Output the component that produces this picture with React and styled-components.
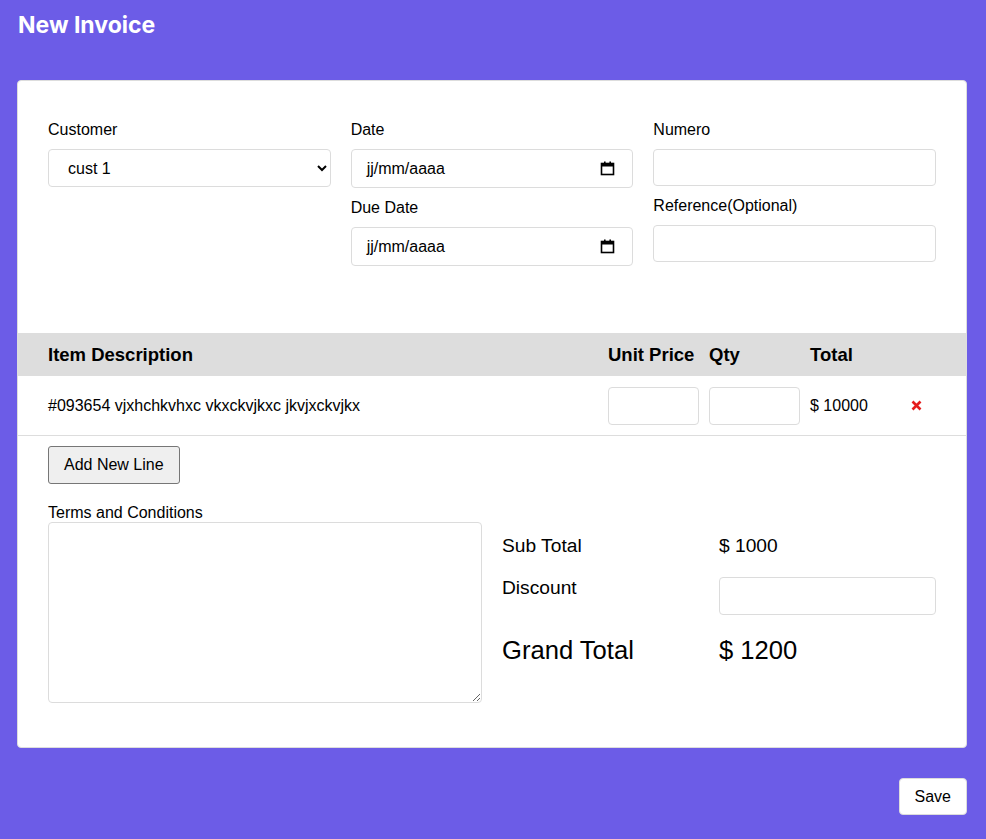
import React from 'react';
import styled, { createGlobalStyle } from 'styled-components';

const GlobalStyle = createGlobalStyle`
  html, body {
    margin: 0;
    padding: 0;
    background: #6c5ce7;
  }
  body {
    font-family: "Liberation Sans", Arial, sans-serif;
    color: #000;
  }
  * {
    box-sizing: border-box;
  }
`;

const CalendarIcon = () => (
  <svg width="15" height="15" viewBox="0 0 15 15" aria-hidden="true">
    <rect x="1.5" y="2.5" width="12" height="11" fill="none" stroke="#000" strokeWidth="1.6" />
    <rect x="1.5" y="2.5" width="12" height="3" fill="#000" />
    <rect x="4" y="0.5" width="1.6" height="3" fill="#000" />
    <rect x="9.4" y="0.5" width="1.6" height="3" fill="#000" />
  </svg>
);

const RemoveIcon = () => (
  <svg width="11" height="11" viewBox="0 0 11 11" aria-hidden="true">
    <path d="M1.5 1.5 L9.5 9.5 M9.5 1.5 L1.5 9.5" stroke="#e51c1c" strokeWidth="2.6" strokeLinecap="butt" />
  </svg>
);

const App = () => (
  <Page>
    <GlobalStyle />
    <Title>New Invoice</Title>
    <Card>
      <TopSection>
        <Column>
          <Label>Customer</Label>
          <Select defaultValue="cust1">
            <option value="cust1">cust 1</option>
            <option value="cust2">cust 2</option>
          </Select>
        </Column>
        <Column>
          <Label>Date</Label>
          <DateBox>
            <span>jj/mm/aaaa</span>
            <CalendarIcon />
          </DateBox>
          <Label>Due Date</Label>
          <DateBox>
            <span>jj/mm/aaaa</span>
            <CalendarIcon />
          </DateBox>
        </Column>
        <Column>
          <Label>Numero</Label>
          <TextInput />
          <Label>Reference(Optional)</Label>
          <TextInput />
        </Column>
      </TopSection>

      <TableHead>
        <span>Item Description</span>
        <span>Unit Price</span>
        <span>Qty</span>
        <span>Total</span>
        <span />
      </TableHead>
      <TableRow>
        <span>#093654 vjxhchkvhxc vkxckvjkxc jkvjxckvjkx</span>
        <CellInput />
        <CellInput />
        <span>$ 10000</span>
        <RemoveButton type="button" aria-label="remove line">
          <RemoveIcon />
        </RemoveButton>
      </TableRow>

      <BottomSection>
        <AddLineButton type="button">Add New Line</AddLineButton>
        <TermsLabel>Terms and Conditions</TermsLabel>
        <BottomGrid>
          <Terms />
          <Summary>
            <SummaryText>Sub Total</SummaryText>
            <SummaryText>$ 1000</SummaryText>
            <SummaryText>Discount</SummaryText>
            <DiscountInput />
            <SummaryText $big>Grand Total</SummaryText>
            <SummaryText $big>$ 1200</SummaryText>
          </Summary>
        </BottomGrid>
      </BottomSection>
    </Card>
    <Footer>
      <SaveButton type="button">Save</SaveButton>
    </Footer>
  </Page>
);

export default App;

const Page = styled.div`
  min-height: 100vh;
  background: #6c5ce7;
  padding: 11px 19px 24px 17px;
`;

const Title = styled.h1`
  margin: 0 0 40px 1px;
  font-family: Inter, "Liberation Sans", sans-serif;
  font-size: 23px;
  font-weight: 700;
  line-height: 29px;
  color: #fff;
`;

const Card = styled.div`
  background: #fff;
  border: 1px solid #ddd;
  border-radius: 4px;
  overflow: hidden;
`;

const TopSection = styled.div`
  display: grid;
  grid-template-columns: repeat(3, 1fr);
  column-gap: 20px;
  padding: 40px 30px 67px;
`;

const Column = styled.div`
  display: flex;
  flex-direction: column;
`;

const Label = styled.label`
  display: block;
  font-size: 16px;
  line-height: 18px;
  margin-bottom: 10px;

  input + &, div + & {
    margin-top: 11px;
  }
`;

const fieldBase = `
  width: 100%;
  border: 1px solid #dcdcdc;
  border-radius: 4px;
  background: #fff;
  font-family: "Liberation Sans", Arial, sans-serif;
  font-size: 16px;
  color: #000;
  outline: none;
`;

const Select = styled.select`
  ${fieldBase}
  height: 38px;
  padding: 0 8px 0 15px;
`;

const DateBox = styled.div`
  ${fieldBase}
  height: 39px;
  display: flex;
  align-items: center;
  justify-content: space-between;
  padding: 0 17px 0 15px;
`;

const TextInput = styled.input`
  ${fieldBase}
  height: 37px;
  padding: 0 12px;
`;

const TableHead = styled.div`
  display: grid;
  grid-template-columns: 560px 101px 101px 100px 1fr;
  align-items: center;
  height: 43px;
  padding: 0 30px;
  background: #dddddd;
  font-size: 18.5px;
  font-weight: 700;
`;

const TableRow = styled.div`
  display: grid;
  grid-template-columns: 560px 101px 101px 100px 1fr;
  align-items: center;
  height: 60px;
  padding: 0 30px;
  border-bottom: 1px solid #dddddd;
  font-size: 16px;
`;

const CellInput = styled.input`
  ${fieldBase}
  width: 91px;
  height: 38px;
  padding: 0 8px;
`;

const RemoveButton = styled.button`
  display: flex;
  align-items: center;
  border: none;
  background: none;
  padding: 0 0 0 1px;
  cursor: pointer;
`;

const BottomSection = styled.div`
  padding: 10px 30px 44px;
`;

const AddLineButton = styled.button`
  display: block;
  height: 38px;
  padding: 0 15px;
  font-family: "Liberation Sans", Arial, sans-serif;
  font-size: 16px;
  color: #000;
  background: #efefef;
  border: 1px solid #767676;
  border-radius: 3px;
`;

const TermsLabel = styled.label`
  display: block;
  margin-top: 20px;
  font-size: 16px;
  line-height: 18px;
`;

const BottomGrid = styled.div`
  display: grid;
  grid-template-columns: 1fr 1fr;
  column-gap: 20px;
`;

const Terms = styled.textarea`
  ${fieldBase}
  height: 181px;
  resize: vertical;
  padding: 8px;
`;

const Summary = styled.div`
  display: grid;
  grid-template-columns: 1fr 1fr;
  align-content: start;
  row-gap: 20px;
  padding-top: 13px;
`;

const SummaryText = styled.div`
  font-size: ${(p) => (p.$big ? '25.6px' : '19.2px')};
  line-height: ${(p) => (p.$big ? '30px' : '22px')};
`;

const DiscountInput = styled.input`
  ${fieldBase}
  height: 38px;
  padding: 0 12px;
`;

const Footer = styled.div`
  display: flex;
  justify-content: flex-end;
  margin-top: 30px;
`;

const SaveButton = styled.button`
  height: 37px;
  padding: 0 15px;
  font-family: "Liberation Sans", Arial, sans-serif;
  font-size: 16px;
  color: #000;
  background: #fff;
  border: 1px solid #dcdcdc;
  border-radius: 4px;
`;
